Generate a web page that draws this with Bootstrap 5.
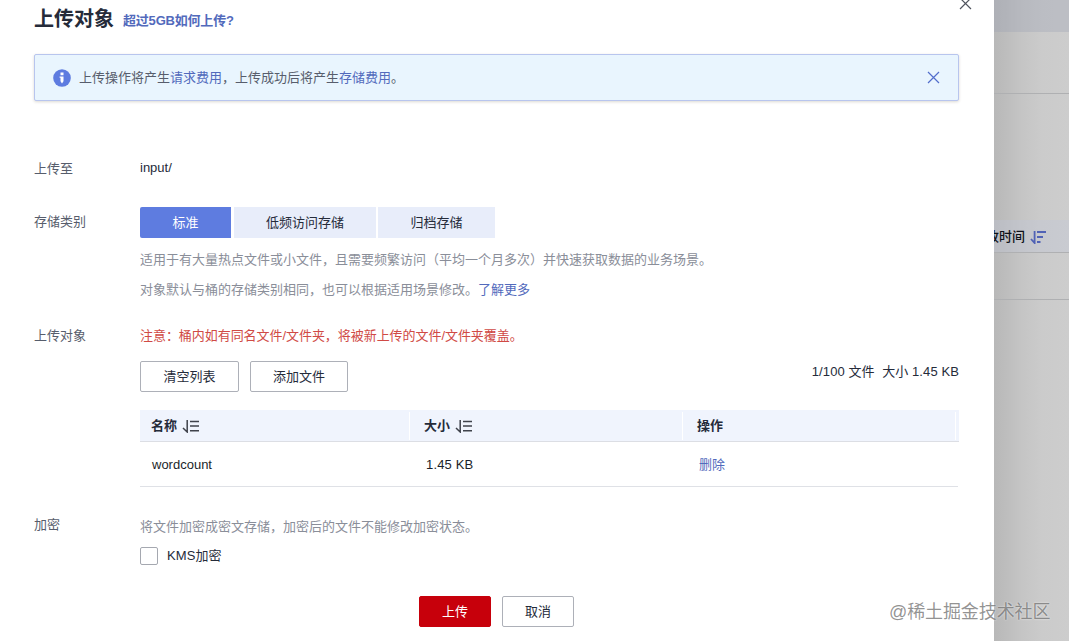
<!DOCTYPE html>
<html lang="zh-CN">
<head>
<meta charset="utf-8">
<meta name="viewport" content="width=device-width, initial-scale=1">
<title>上传对象</title>
<link href="https://cdn.jsdelivr.net/npm/bootstrap@5.3.0/dist/css/bootstrap.min.css" rel="stylesheet">
<style>
  body { font: 13px/20px "Liberation Sans", "Noto Sans CJK SC", sans-serif; color: #252b3a; overflow: hidden; height: 641px; background: #fff; }
  a { color: #526abc; text-decoration: none; }
  svg { display: block; flex: none; }
  .dialog-pane { width: 994px; height: 641px; padding: 0 35px 0 34px; }
  .dialog-head { height: 54px; padding-top: 4px; }
  .dialog-head h1 { font-size: 20px; line-height: 30px; font-weight: 700; margin: 0; }
  .dialog-head a { font-weight: 700; margin: 7px 0 0 9px; letter-spacing: -.2px; }
  .dialog-close { margin: -7px -13px 0 auto; }
  .notice { height: 47px; background: #e9f5fe; border: 1px solid #b8c5ee; border-radius: 2px; padding: 0 18px 0 18px; color: #575d6c; box-shadow: 0 1px 3px rgba(80,70,40,.2); }
  .form-line { display: grid; grid-template-columns: 106px 819px; }
  .caption-col { color: #575d6c; }
  .hint { color: #8a8e99; }
  .tier { height: 31px; border: 0; border-radius: 0; background: #e8edfa; color: #252b3a; font-size: 13px; line-height: 20px; padding: 0; --bs-btn-border-width: 0; }
  .tier.active { background: #5e7ce0 !important; color: #fff; border-radius: 2px 0 0 2px; }
  .act { height: 31px; border: 1px solid #adb0b8; border-radius: 2px; color: #252b3a; font-size: 13px; line-height: 20px; padding: 0; background: #fff; }
  .act-main { background: #c7000b; border-color: #c7000b; color: #fff; }
  .w72 { width: 72px; } .w91 { width: 91px; } .w98 { width: 98px; } .w99 { width: 99px; } .w117 { width: 117px; } .w142 { width: 142px; }
  .warn { color: #d04a45; letter-spacing: -.05px; }
  .files { display: grid; grid-template-columns: 270px 273px 276px; }
  .files-head { height: 32px; margin-top: 18px; background: #f0f4fd; border-bottom: 1px solid #dcdee4; font-weight: 700; }
  .files-head > div { height: 28px; margin-top: 2px; border-right: 1px solid #fff; }
  .files-head > div:last-child { margin-right: 3px; }
  .files-body { height: 45px; padding-top: 1px; border-bottom: 1px solid #dfe1e6; color: #1b1f2a; margin-right: 1px; }
  .kms-box { width: 18px; height: 18px; border: 1px solid #a5a8b0; border-radius: 2px !important; margin: 0; }
  .behind { width: 75px; height: 641px; background: linear-gradient(90deg, #b8b8b8, #bebebe 14px, #c5c5c5 28px, #cbcbcb 48px, #cdcdcd); overflow: hidden; }
  .behind > div { border-bottom: 1px solid #afb0b2; }
  .behind .topbar { height: 32px; border: 0; background: rgba(155,160,178,.33); }
  .behind .colhead { height: 33px; padding-top: 2px; background: rgba(194,200,218,.32); color: #101218; font-weight: 500; }
  .colhead span { margin-left: -8px; white-space: nowrap; }
  .watermark { position: absolute; left: 889px; top: 600px; font: 18px/24px "Liberation Sans", "Noto Sans CJK SC", sans-serif; letter-spacing: -.1px; color: rgba(105,105,105,.72); white-space: nowrap; text-shadow: 0 0 2px rgba(255,255,255,.8); }
</style>
</head>
<body>
<div class="d-flex">
  <main class="dialog-pane flex-shrink-0">
    <header class="dialog-head d-flex align-items-start">
      <h1>上传对象</h1><a href="#">超过5GB如何上传?</a>
      <svg class="dialog-close" width="13" height="13" viewBox="0 0 13 13" stroke="#50545e" stroke-width="1.2" fill="none"><path d="M1 1l11 11M12 1L1 12"/></svg>
    </header>
    <div class="notice d-flex align-items-center">
      <svg width="18" height="18" viewBox="0 0 18 18"><circle cx="9" cy="9" r="8.8" fill="#5e7ce0"/><path d="M7.5 3.5h3v2.7h-3zM6.6 7.5h3.9v4.7L9 14.4l-1.5-2.2V8.8h-.9z" fill="#fff"/></svg>
      <span class="ms-2">上传操作将产生<a href="#">请求费用</a>，上传成功后将产生<a href="#">存储费用</a>。</span>
      <svg class="ms-auto" width="13" height="13" viewBox="0 0 13 13" stroke="#526ecc" stroke-width="1.2" fill="none"><path d="M1 1l11 11M12 1L1 12"/></svg>
    </div>

    <div class="form-line" style="margin-top:57px"><div class="caption-col" style="padding-top:1px">上传至</div><div>input/</div></div>

    <div class="form-line" style="margin-top:28px">
      <div class="caption-col" style="padding-top:5px">存储类别</div>
      <div>
        <div class="d-flex">
          <button class="btn tier active w91">标准</button>
          <button class="btn tier w142" style="margin-left:3px">低频访问存储</button>
          <button class="btn tier w117" style="margin-left:2px">归档存储</button>
        </div>
        <div class="hint" style="margin-top:12px">适用于有大量热点文件或小文件，且需要频繁访问（平均一个月多次）并快速获取数据的业务场景。</div>
        <div class="hint" style="margin-top:10px">对象默认与桶的存储类别相同，也可以根据适用场景修改。<a href="#">了解更多</a></div>
      </div>
    </div>

    <div class="form-line" style="margin-top:26px">
      <div class="caption-col">上传对象</div>
      <div>
        <div class="warn">注意：桶内如有同名文件/文件夹，将被新上传的文件/文件夹覆盖。</div>
        <div class="d-flex" style="margin-top:15px">
          <button class="btn act w99">清空列表</button>
          <button class="btn act w98" style="margin-left:11px">添加文件</button>
          <span class="ms-auto" style="letter-spacing:.1px;padding-top:1px">1/100 文件&nbsp; 大小 1.45 KB</span>
        </div>
        <div class="files files-head">
          <div class="d-flex align-items-center" style="padding-left:11px">名称
            <svg style="margin-left:5px" width="18" height="14" viewBox="0 0 18 14" fill="none" stroke="#3f424b" stroke-width="1.5"><path d="M5.2 1v12L1 9M8 2.5h9M8 7h9M8 11.8h9"/></svg>
          </div>
          <div class="d-flex align-items-center" style="padding-left:14px">大小
            <svg style="margin-left:5px" width="18" height="14" viewBox="0 0 18 14" fill="none" stroke="#3f424b" stroke-width="1.5"><path d="M5.2 1v12L1 9M8 2.5h9M8 7h9M8 11.8h9"/></svg>
          </div>
          <div class="d-flex align-items-center" style="padding-left:14px">操作</div>
        </div>
        <div class="files files-body align-items-center">
          <div style="padding-left:12px">wordcount</div><div style="padding-left:16px;letter-spacing:.15px">1.45 KB</div><div style="padding-left:16px"><a href="#">删除</a></div>
        </div>
      </div>
    </div>

    <div class="form-line" style="margin-top:28px">
      <div class="caption-col">加密</div>
      <div>
        <div class="hint" style="padding-top:2px">将文件加密成密文存储，加密后的文件不能修改加密状态。</div>
        <div class="d-flex align-items-center" style="margin-top:9px">
          <input class="form-check-input kms-box" type="checkbox" id="kms"><label for="kms" style="margin-left:9px;letter-spacing:.1px">KMS加密</label>
        </div>
      </div>
    </div>

    <footer class="d-flex justify-content-center" style="margin-top:30px">
      <button class="btn act act-main w72">上传</button>
      <button class="btn act w72" style="margin-left:11px">取消</button>
    </footer>
  </main>
  <aside class="behind flex-shrink-0">
    <div class="topbar"></div>
    <div style="height:62px"></div>
    <div style="height:126px;border:0"></div>
    <div class="colhead d-flex align-items-center"><span>改时间</span>
      <svg style="margin-left:5px" width="17" height="14" viewBox="0 0 17 14" fill="none" stroke="#5062b5" stroke-width="1.8"><path d="M4.6 1v12L1 9M7 2h9M7 7h6M7 12h3.5"/></svg>
    </div>
    <div style="height:47px"></div>
  </aside>
</div>
<div class="watermark">@稀土掘金技术社区</div>
<script src="https://cdn.jsdelivr.net/npm/bootstrap@5.3.0/dist/js/bootstrap.bundle.min.js"></script>
</body>
</html>
